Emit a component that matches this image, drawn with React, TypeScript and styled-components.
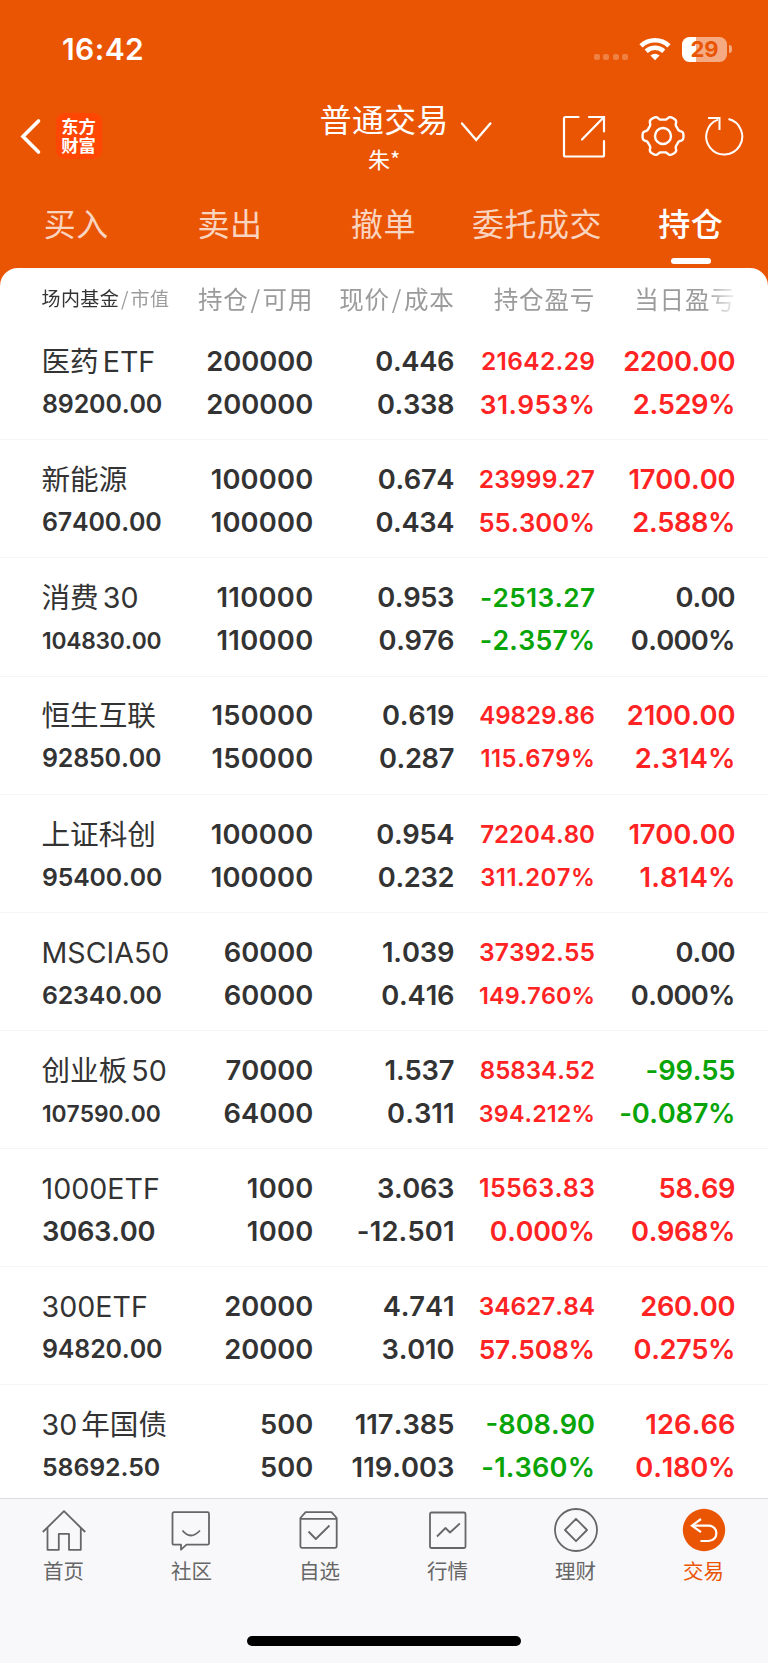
import React from "react";
import styled, { createGlobalStyle } from "styled-components";

const ORANGE = "#ea5504";
const INK = "#333333";
const RED = "#ff2323";
const GREEN = "#08a408";
const CJK = '"Noto Sans CJK SC", sans-serif';

const GlobalStyle = createGlobalStyle`
  * { box-sizing: border-box; }
  body { margin: 0; background: #fff; }
`;

const Screen = styled.main`
  width: 768px;
  height: 1663px;
  display: flex;
  flex-direction: column;
  overflow: hidden;
  background: ${ORANGE};
  font-family: Inter, ${CJK};
  color: ${INK};
  white-space: nowrap;
`;

const StatusBar = styled.div`
  flex: none;
  height: 98px;
  padding: 0 36.5px 0 62px;
  display: flex;
  align-items: center;
  justify-content: space-between;
  color: #fff;
`;

const Clock = styled.time`
  font-size: 30px;
  font-weight: 600;
  line-height: 40px;
  letter-spacing: 0.4px;
`;

const StatusIcons = styled.div`
  display: flex;
  align-items: center;
`;

const SignalDots = styled.div`
  display: flex;
  gap: 3.3px;
  margin: 16px 11px 0 0;
`;

const SignalDot = styled.i`
  width: 6px;
  height: 6px;
  border-radius: 2px;
  background: rgba(255, 255, 255, 0.26);
`;

const Battery = styled.div`
  width: 45px;
  height: 25px;
  margin-left: 11px;
  border-radius: 7.5px;
  background: linear-gradient(90deg, #fff 14px, rgba(255, 255, 255, 0.5) 14px);
  color: ${ORANGE};
  font-size: 22px;
  font-weight: 700;
  line-height: 25px;
  text-align: center;
`;

const BatteryNub = styled.i`
  width: 3px;
  height: 8px;
  margin-left: 1.5px;
  border-radius: 0 4px 4px 0;
  background: rgba(255, 255, 255, 0.5);
`;

const NavBar = styled.header`
  flex: none;
  height: 84px;
  padding: 0 23px 0 20px;
  display: grid;
  grid-template-columns: 300px 126px 299px;
  color: #fff;
`;

const NavLeft = styled.div`
  display: flex;
  align-items: flex-start;
  padding-top: 14.5px;
  gap: 13.5px;
`;

const Logo = styled.div`
  width: 46px;
  height: 46px;
  padding-top: 3px;
  border-radius: 9px;
  background: #ff4603;
  font: 700 17.3px/19.5px ${CJK};
  text-align: center;
`;

const Account = styled.div`
  display: flex;
  justify-content: center;
`;

const AccountText = styled.div`
  text-align: center;
`;

const AccountTitle = styled.h1`
  margin: -2px 0 0;
  font: 400 31.8px/44px ${CJK};
  letter-spacing: 0.5px;
`;

const AccountOwner = styled.div`
  font: 400 22px/37px ${CJK};
`;

const Actions = styled.div`
  display: flex;
  justify-content: flex-end;
  align-items: flex-start;
  padding-top: 14px;
`;

const Tabs = styled.nav`
  flex: none;
  height: 86px;
  padding-top: 17.5px;
  display: grid;
  grid-template-columns: repeat(5, 1fr);
`;

const Tab = styled.a<{ $active?: boolean }>`
  display: flex;
  flex-direction: column;
  align-items: center;
  color: ${(p) => (p.$active ? "#fff" : "rgba(255, 255, 255, 0.76)")};
  font: ${(p) => (p.$active ? 500 : 400)} 32px/44px ${CJK};
  letter-spacing: 0.5px;
  text-indent: -1px;
  &::after {
    content: "";
    width: 40px;
    height: 6px;
    margin-top: 14.5px;
    border-radius: 3px;
    background: ${(p) => (p.$active ? "#fff" : "transparent")};
  }
`;

const Panel = styled.section`
  flex: 1;
  min-height: 0;
  overflow: hidden;
  border-radius: 18px 18px 0 0;
  background: #fff;
`;

const columns = `
  display: grid;
  grid-template-columns: 140px 131.2px 141.3px 140.5px 140.5px;
  padding-left: 42px;
`;

const TableHead = styled.div`
  ${columns}
  height: 54.3px;
  padding-top: 11px;
  font: 400 24.5px/40px ${CJK};
  color: #9b9b9b;
  letter-spacing: 0.8px;
  mask-image: linear-gradient(90deg, #000 705px, transparent 740px);
`;

const HeadCell = styled.div`
  display: flex;
  justify-content: flex-end;
`;

const HeadFirst = styled.div`
  font-size: 19px;
  letter-spacing: 0.4px;
  line-height: 38px;
  margin-left: -0.5px;
`;

const HeadStrong = styled.span`
  color: ${INK};
`;

const Slash = styled.span`
  padding: 0 1.8px;
`;

const Row = styled.div`
  ${columns}
  height: 118.1px;
  padding-top: 17.9px;
  border-bottom: 1.5px solid #f5f5f6;
`;

const Cell = styled.div<{ $left?: boolean }>`
  display: flex;
  flex-direction: column;
  align-items: ${(p) => (p.$left ? "flex-start" : "flex-end")};
`;

const Name = styled.span`
  font-size: 28.6px;
  line-height: 43px;
  font-weight: 400;
  word-spacing: -4px;
  margin-left: -0.5px;
`;

const Value = styled.span<{ $size: number; $spacing: number; $color?: string }>`
  color: ${(p) => p.$color || INK};
  font-size: ${(p) => p.$size}px;
  line-height: 43px;
  font-weight: 600;
  font-kerning: none;
  letter-spacing: ${(p) => p.$spacing}px;
  margin-right: ${(p) => -p.$spacing}px;
`;

const BottomBar = styled.footer`
  flex: none;
  height: 165px;
  display: flex;
  flex-direction: column;
  align-items: center;
  justify-content: space-between;
  padding-bottom: 17px;
  border-top: 1px solid #dcdcde;
  background: #f8f8fa;
`;

const BottomTabs = styled.nav`
  width: 100%;
  display: grid;
  grid-template-columns: repeat(6, 1fr);
`;

const BottomTab = styled.a<{ $active?: boolean }>`
  padding-top: 7px;
  display: flex;
  flex-direction: column;
  align-items: center;
  color: ${(p) => (p.$active ? ORANGE : "#666")};
  font: 400 20.5px/32px ${CJK};
  text-indent: -1px;
`;

const HomeIndicator = styled.div`
  width: 274px;
  height: 10px;
  border-radius: 5px;
  background: #000;
`;

const Drawing = styled.svg`
  display: block;
  flex: none;
  fill: none;
  stroke: currentColor;
`;

const Chevron = styled(Drawing)`
  margin: 0 -47px 0 12.5px;
`;

const GearIcon = styled(Drawing)`
  margin: 0 16.5px 0 35px;
`;

type V = [text: string, size: number, color?: string, spacing?: number];
type Holding = { name: string; value: V; cells: [V, V][] };

const FULL = 27.3;

// Evens out the narrow "1" and the wide "." and "%" over the figure's length.
const spacingOf = ([text, size, , spacing]: V) => {
  if (spacing !== undefined) return spacing;
  if (size !== FULL) return 0;
  const count = (ch: string) => text.split(ch).length - 1;
  const extra = count("1") + count("-") * 0.8 - count(".") * 1.7 - count("%") * 0.8;
  return Math.round((extra / text.length) * 100) / 100;
};

const h = (
  name: string,
  value: V,
  qty: [string, string],
  price: [string, string],
  total: [V, V],
  day: [V, V]
): Holding => ({
  name,
  value,
  cells: [
    [[qty[0], FULL], [qty[1], FULL]],
    [[price[0], FULL], [price[1], FULL]],
    total,
    day,
  ],
});

const holdings: Holding[] = [
  h("医药 ETF", ["89200.00", 25, INK, -0.17], ["200000", "200000"], ["0.446", "0.338"],
    [["21642.29", 24.5, RED, 0.34], ["31.953%", 26.3, RED, 0.4]], [["2200.00", FULL, RED, -0.4], ["2.529%", FULL, RED]]),
  h("新能源", ["67400.00", 25, INK, -0.17], ["100000", "100000"], ["0.674", "0.434"],
    [["23999.27", 24.5, RED, 0.15], ["55.300%", 25.7, RED]], [["1700.00", FULL, RED, -0.15], ["2.588%", FULL, RED]]),
  h("消费 30", ["104830.00", 22.8, INK, -0.22], ["110000", "110000"], ["0.953", "0.976"],
    [["-2513.27", 26.2, GREEN, 0.35], ["-2.357%", 26.7, GREEN, 0.3]], [["0.00", FULL, INK, -0.9], ["0.000%", FULL, INK, -0.7]]),
  h("恒生互联", ["92850.00", 25, INK, -0.17], ["150000", "150000"], ["0.619", "0.287"],
    [["49829.86", 24.1, RED], ["115.679%", 23.8, RED, 0.55]], [["2100.00", FULL, RED], ["2.314%", FULL, RED, 0.1]]),
  h("上证科创", ["95400.00", 24.8, INK, -0.12], ["100000", "100000"], ["0.954", "0.232"],
    [["72204.80", 24.1, RED], ["311.207%", 23.8, RED, 0.55]], [["1700.00", FULL, RED, -0.15], ["1.814%", FULL, RED, 0.25]]),
  h("MSCIA50", ["62340.00", 24.9, INK, -0.17], ["60000", "60000"], ["1.039", "0.416"],
    [["37392.55", 24.6, RED, 0.1], ["149.760%", 23.4, RED, 0.1]], [["0.00", FULL, INK, -0.9], ["0.000%", FULL, INK, -0.7]]),
  h("创业板 50", ["107590.00", 22.8, INK, -0.05], ["70000", "64000"], ["1.537", "0.311"],
    [["85834.52", 24.1, RED], ["394.212%", 23.4, RED, 0.1]], [["-99.55", FULL, GREEN], ["-0.087%", FULL, GREEN, -0.3]]),
  h("1000ETF", ["3063.00", FULL], ["1000", "1000"], ["3.063", "-12.501"],
    [["15563.83", 25, RED, 0.3], ["0.000%", 26.8, RED, -0.2]], [["58.69", FULL, RED], ["0.968%", FULL, RED]]),
  h("300ETF", ["94820.00", 25, INK, -0.17], ["20000", "20000"], ["4.741", "3.010"],
    [["34627.84", 24.4, RED], ["57.508%", 26.3, RED, -0.15]], [["260.00", FULL, RED, -0.4], ["0.275%", FULL, RED]]),
  h("30 年国债", ["58692.50", 24.9, INK, -0.1], ["500", "500"], ["117.385", "119.003"],
    [["-808.90", 27.2, GREEN], ["-1.360%", 27.2, GREEN, 0.15]], [["126.66", FULL, RED, 0.1], ["0.180%", FULL, RED, -0.2]]),
];

const gearPath = (() => {
  const points: string[] = [];
  for (let i = 0; i <= 180; i++) {
    const a = (i / 180) * Math.PI * 2;
    const r = 18.4 + 2.1 * Math.tanh(2.2 * Math.cos(6 * a));
    points.push(`${(22 + r * Math.cos(a)).toFixed(2)} ${(22 + r * Math.sin(a)).toFixed(2)}`);
  }
  return `M${points.join("L")}Z`;
})();

const Wifi = () => (
  <Drawing width="32" height="24" viewBox="0 0 32 24">
    <g strokeWidth="4.6">
      <path d="M2 8.8C9.8 1.3 22.2 1.3 30 8.8" />
      <path d="M7.2 14.2C12.2 9.5 19.8 9.5 24.8 14.2" />
    </g>
    <path d="M11.4 18.6Q16 14.8 20.6 18.6L16 23.2Z" fill="currentColor" stroke="none" />
  </Drawing>
);

const tabIcons = {
  home: (
    <>
      <path d="M0.8 24L22 3.2L43.2 24" />
      <path d="M5.5 20V41.8H16.8V25.8H27V41.8H38.8V20" />
    </>
  ),
  chat: (
    <>
      <path d="M4 4.2H37.5Q39 4.2 39 5.7V35.2Q39 36.7 37.5 36.7H16.5L11 41.7V36.7H4Q2.5 36.7 2.5 35.2V5.7Q2.5 4.2 4 4.2Z" />
      <path d="M12.500 22.500Q20.500 32.500 30 22.500" />
    </>
  ),
  pick: (
    <>
      <path d="M2.400 10L7.600 4.200H33.500L38.700 10V38Q38.700 39.800 36.900 39.800H4.200Q2.400 39.800 2.400 38ZM2.400 10.800H38.700" />
      <path d="M10.500 23.500L17.800 31L31.500 17.500" />
    </>
  ),
  market: (
    <>
      <rect x="4" y="4.500" width="35.500" height="35.500" rx="1.500" />
      <path d="M11 28.500L19.500 20L24 24.500L33.800 15.500" />
    </>
  ),
  wealth: (
    <>
      <circle cx="22" cy="22" r="21" />
      <path d="M22 10.800L33 22L22 33.200L11 22Z" />
    </>
  ),
  trade: (
    <>
      <circle cx="22" cy="22" r="21.200" fill="currentColor" stroke="none" />
      <g stroke="#fff" strokeWidth="2.200" strokeLinejoin="miter">
        <path d="M19 11L10 17.700L19 24.200" />
        <path d="M10 17.700H26.500C37 17.700 37 33 26.500 33H18.500" />
      </g>
    </>
  ),
};

const bottomItems: [keyof typeof tabIcons, string][] = [
  ["home", "首页"],
  ["chat", "社区"],
  ["pick", "自选"],
  ["market", "行情"],
  ["wealth", "理财"],
  ["trade", "交易"],
];

const Figure = ({ v }: { v: V }) => (
  <Value $size={v[1]} $color={v[2]} $spacing={spacingOf(v)}>
    {v[0]}
  </Value>
);

export default function App() {
  return (
    <Screen>
      <GlobalStyle />
      <StatusBar>
        <Clock>16:42</Clock>
        <StatusIcons>
          <SignalDots>
            {[0, 1, 2, 3].map((i) => (
              <SignalDot key={i} />
            ))}
          </SignalDots>
          <Wifi />
          <Battery>29</Battery>
          <BatteryNub />
        </StatusIcons>
      </StatusBar>

      <NavBar>
        <NavLeft>
          <Drawing width="22" height="46" viewBox="0 0 22 46" strokeWidth="3.6" strokeLinecap="round">
            <path d="M18.500 8L3 23.500L18.500 39" />
          </Drawing>
          <Logo>
            东方
            <br />
            财富
          </Logo>
        </NavLeft>
        <Account>
          <AccountText>
            <AccountTitle>普通交易</AccountTitle>
            <AccountOwner>朱*</AccountOwner>
          </AccountText>
          <Chevron width="32" height="44" viewBox="0 0 32 44" strokeWidth="2.400" strokeLinecap="round">
            <path d="M1 25.500L15.200 42L29.300 25.500" />
          </Chevron>
        </Account>
        <Actions>
          <Drawing width="44" height="48" viewBox="0 0 44 48" strokeWidth="2.200" strokeLinecap="round">
            <path d="M16.500 5H3.500Q2 5 2 6.500V43Q2 44.500 3.500 44.500H40.500Q42 44.500 42 43V29" />
            <path d="M27 5H42V19.500M42 5L20 27.500" />
          </Drawing>
          <GearIcon width="44" height="48" viewBox="0 -2 44 48" strokeWidth="2.400">
            <path d={gearPath} />
            <circle cx="22" cy="22" r="8" />
          </GearIcon>
          <Drawing width="44" height="48" viewBox="0 0 44 48" strokeWidth="2">
            <path d="M27.500 7A18 18 0 1 1 17 7.600" />
            <path d="M7 6H18.500V18" />
          </Drawing>
        </Actions>
      </NavBar>

      <Tabs>
        <Tab>买入</Tab>
        <Tab>卖出</Tab>
        <Tab>撤单</Tab>
        <Tab>委托成交</Tab>
        <Tab $active>持仓</Tab>
      </Tabs>

      <Panel>
        <TableHead>
          <HeadFirst>
            <HeadStrong>场内基金</HeadStrong>
            <Slash>/</Slash>市值
          </HeadFirst>
          <HeadCell>持仓<Slash>/</Slash>可用</HeadCell>
          <HeadCell>现价<Slash>/</Slash>成本</HeadCell>
          <HeadCell>持仓盈亏</HeadCell>
          <HeadCell>当日盈亏</HeadCell>
        </TableHead>
        {holdings.map((item) => (
          <Row key={item.name}>
            <Cell $left>
              <Name>{item.name}</Name>
              <Figure v={item.value} />
            </Cell>
            {item.cells.map((pair, c) => (
              <Cell key={c}>
                {pair.map((v, i) => (
                  <Figure key={i} v={v} />
                ))}
              </Cell>
            ))}
          </Row>
        ))}
      </Panel>

      <BottomBar>
        <BottomTabs>
          {bottomItems.map(([icon, label]) => (
            <BottomTab key={icon} $active={icon === "trade"}>
              <Drawing width="44" height="48" viewBox="0 -2 44 48" strokeWidth="1.800" strokeLinejoin="round" overflow="visible">
                {tabIcons[icon]}
              </Drawing>
              {label}
            </BottomTab>
          ))}
        </BottomTabs>
        <HomeIndicator />
      </BottomBar>
    </Screen>
  );
}
